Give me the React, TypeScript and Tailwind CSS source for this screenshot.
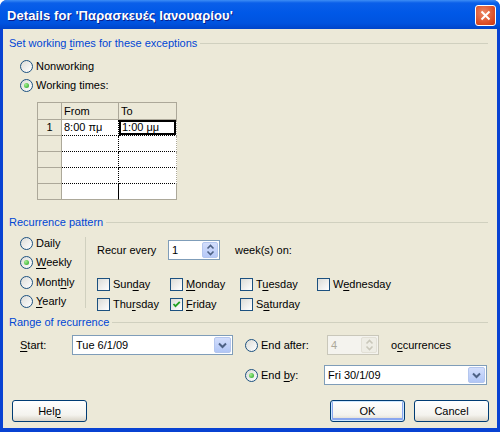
import React from 'react';

// ---------- Small pieces ----------
function Key({ text, k }: { text: string; k: number }) {
  if (k < 0) return <>{text}</>;
  return (
    <>
      {text.slice(0, k)}
      <span className="underline decoration-1 underline-offset-[2px]">{text[k]}</span>
      {text.slice(k + 1)}
    </>
  );
}

function Radio({ checked, children }: { checked?: boolean; children: React.ReactNode }) {
  return (
    <div className="flex items-center h-[13px]">
      <span className="w-[13px] h-[13px] shrink-0 rounded-full border border-[#1C5180] bg-[linear-gradient(135deg,#DCDCD7,#FFFFFF)] flex items-center justify-center">
        {checked ? (
          <span className="w-[5px] h-[5px] rounded-full bg-[radial-gradient(circle_at_35%_35%,#A4F08F,#21A121)]" />
        ) : null}
      </span>
      <span className="ml-[3px] whitespace-nowrap">{children}</span>
    </div>
  );
}

function Check({ checked, children }: { checked?: boolean; children: React.ReactNode }) {
  return (
    <div className="flex items-center h-[13px]">
      <span className="w-[13px] h-[13px] shrink-0 border border-[#1C5180] bg-[linear-gradient(135deg,#DCDCD7,#FFFFFF)] flex items-center justify-center">
        {checked ? (
          <svg width="9" height="9" viewBox="0 0 9 9">
            <path d="M1.5 4 L3.5 6.2 L7.8 1.8" stroke="#21A121" strokeWidth="1.8" fill="none" />
          </svg>
        ) : null}
      </span>
      <span className="ml-[3px] whitespace-nowrap">{children}</span>
    </div>
  );
}

function Section({ title }: { title: React.ReactNode }) {
  return (
    <div className="flex items-center h-[13px] pl-[6px] pr-[9px]">
      <span className="text-[#0046D5] whitespace-nowrap">{title}</span>
      <span className="flex-1 h-px bg-[#D0D0BF] ml-[3px]" />
    </div>
  );
}

function Spin({ value, disabled }: { value: string; disabled?: boolean }) {
  const arrow = disabled ? '#C9C7BA' : '#4D6185';
  return (
    <div
      className={[
        'flex h-[20px] w-[52px] border',
        disabled ? 'border-[#C9C7BA] bg-[#F4F3EE] text-[#ACA899]' : 'border-[#7F9DB9] bg-white',
      ].join(' ')}
    >
      <span className="flex-1 pl-[3px] leading-[18px]">{value}</span>
      <span
        className={[
          'w-[16px] m-px rounded-[2px] flex items-center justify-center',
          disabled
            ? 'bg-[#EEEDE5] border border-[#E2E0D6]'
            : 'bg-[linear-gradient(to_bottom,#D3DEFC,#B6C9F7)] border border-[#B4C6EE]',
        ].join(' ')}
      >
        <svg width="9" height="12" viewBox="0 0 9 12">
          <path d="M1.5 4.5 L4.5 1.5 L7.5 4.5" stroke={arrow} strokeWidth="1.6" fill="none" />
          <path d="M1.5 7.5 L4.5 10.5 L7.5 7.5" stroke={arrow} strokeWidth="1.6" fill="none" />
        </svg>
      </span>
    </div>
  );
}

function Combo({ value, width }: { value: string; width: string }) {
  return (
    <div className={`flex h-[20px] ${width} border border-[#7F9DB9] bg-white`}>
      <span className="flex-1 pl-[3px] leading-[18px]">{value}</span>
      <span className="w-[17px] m-px rounded-[2px] border border-[#B4C6EE] bg-[linear-gradient(to_bottom,#D3DEFC,#B1C6F6)] flex items-center justify-center">
        <svg width="9" height="7" viewBox="0 0 9 7">
          <path d="M1 1.5 L4.5 5 L8 1.5" stroke="#4D6185" strokeWidth="2" fill="none" />
        </svg>
      </span>
    </div>
  );
}

function Button({ children, isDefault }: { children: React.ReactNode; isDefault?: boolean }) {
  return (
    <div
      className={[
        'w-[75px] h-[22px] rounded-[3px] border border-[#003C74] flex items-center justify-center',
        'bg-[linear-gradient(to_bottom,#FFFFFF,#F4F3EE_70%,#D9D4C8)]',
        isDefault ? 'shadow-[inset_0_0_0_1px_#CEE7FF,inset_0_-1px_0_2px_#8AA6EE]' : '',
      ].join(' ')}
    >
      {children}
    </div>
  );
}

// ---------- Dialog ----------
const rows = [
  { n: '1', from: '8:00 πμ', to: '1:00 μμ' },
  { n: '', from: '', to: '' },
  { n: '', from: '', to: '' },
  { n: '', from: '', to: '' },
  { n: '', from: '', to: '' },
];

export default function App() {
  return (
    <div className="w-[500px] h-[432px] bg-white font-['Liberation_Sans',Arial,sans-serif] text-[11px] text-black">
      <div className="flex flex-col h-full rounded-t-[7px] overflow-hidden bg-[#0842D2]">
        {/* Title bar */}
        <div className="h-[29px] shrink-0 flex items-center pt-[2px] pl-[7px] pr-[4px] bg-[linear-gradient(to_bottom,#3D8DF5_0px,#0A5FE9_3px,#0058E7_45%,#0053DF_80%,#0044C9_100%)]">
          <div className="flex-1 text-white font-bold text-[13px] tracking-[0.1px] [text-shadow:1px_1px_#0A1E8C] whitespace-nowrap">
            Details for 'Παρασκευές Ιανουαρίου'
          </div>
          <div className="w-[21px] h-[21px] rounded-[3px] border border-white bg-[radial-gradient(circle_at_40%_35%,#EC8866,#DA4A22_70%,#C63A16)] flex items-center justify-center">
            <svg width="11" height="11" viewBox="0 0 11 11">
              <path d="M1.5 1.5 L9.5 9.5 M9.5 1.5 L1.5 9.5" stroke="#FFFFFF" strokeWidth="2" />
            </svg>
          </div>
        </div>

        {/* Body */}
        <div className="flex-1 mx-[3px] mb-[4px] bg-[#ECE9D8] flex flex-col">
          <div className="mt-[8px]">
            <Section title={<>Set working <Key text="times" k={0} /> for these exceptions</>} />
          </div>

          <div className="pl-[17px] mt-[10px]">
            <Radio>Nonworking</Radio>
          </div>
          <div className="pl-[17px] mt-[6px]">
            <Radio checked>Working times:</Radio>
          </div>

          {/* Grid of working times */}
          <div className="ml-[34px] mt-[10px] w-[140px] grid grid-cols-[24px_57px_58px] grid-rows-[17px_repeat(5,16px)] border-t border-l border-[#ACA899]">
            <div className="bg-[#ECE9D8] border-r border-b border-[#ACA899]" />
            <div className="bg-[#ECE9D8] border-r border-b border-[#ACA899] pl-[2px] leading-[16px]">From</div>
            <div className="bg-[#ECE9D8] border-r border-b border-[#ACA899] pl-[2px] leading-[16px]">To</div>
            {rows.map((r, i) => {
              const last = i === rows.length - 1;
              return (
                <React.Fragment key={i}>
                  <div className="bg-[#ECE9D8] border-r border-b border-[#ACA899] text-center leading-[15px]">
                    {r.n}
                  </div>
                  <div
                    className={[
                      'bg-white border-r border-dotted border-r-black pl-[2px] leading-[15px]',
                      last ? 'border-b border-b-[#ACA899] border-solid' : 'border-b border-b-black',
                    ].join(' ')}
                  >
                    {r.from}
                  </div>
                  <div
                    className={[
                      'bg-white border-r border-r-[#ACA899] pl-[2px] leading-[15px]',
                      last ? 'border-b border-b-[#ACA899]' : 'border-b border-dotted border-b-black',
                      i === 0 ? 'shadow-[inset_0_0_0_2px_#000] pl-[3px]' : '',
                    ].join(' ')}
                  >
                    {r.to}
                  </div>
                </React.Fragment>
              );
            })}
          </div>

          <div className="mt-[16px]">
            <Section title="Recurrence pattern" />
          </div>

          {/* Recurrence */}
          <div className="flex mt-[8px] h-[74px]">
            <div className="w-[82px] pl-[17px] flex flex-col">
              <Radio>Daily</Radio>
              <div className="mt-[6px]">
                <Radio checked><Key text="Weekly" k={0} /></Radio>
              </div>
              <div className="mt-[7px]">
                <Radio><Key text="Monthly" k={4} /></Radio>
              </div>
              <div className="mt-[6px]">
                <Radio><Key text="Yearly" k={0} /></Radio>
              </div>
            </div>
            <div className="w-px h-[71px] bg-[#D0D0BF]" />
            <div className="ml-[11px] flex flex-col">
              <div className="flex items-center mt-[3px]">
                <span className="w-[71px]">Recur every</span>
                <Spin value="1" />
                <span className="ml-[15px]">week(s) on:</span>
              </div>
              <div className="mt-[18px] grid grid-cols-[73px_70px_77px_auto] gap-y-[7px]">
                <Check><Key text="Sunday" k={3} /></Check>
                <Check><Key text="Monday" k={0} /></Check>
                <Check><Key text="Tuesday" k={1} /></Check>
                <Check><Key text="Wednesday" k={1} /></Check>
                <Check><Key text="Thursday" k={3} /></Check>
                <Check checked><Key text="Friday" k={0} /></Check>
                <Check><Key text="Saturday" k={1} /></Check>
              </div>
            </div>
          </div>

          <div className="mt-[5px]">
            <Section title="Range of recurrence" />
          </div>

          {/* Range */}
          <div className="mt-[6px] pl-[17px] grid grid-cols-[52px_161px_auto] gap-y-[10px] items-center">
            <span><Key text="Start:" k={0} /></span>
            <Combo value="Tue 6/1/09" width="w-[161px]" />
            <div className="ml-[12px] flex items-center">
              <div className="w-[82px]">
                <Radio>End after:</Radio>
              </div>
              <Spin value="4" disabled />
              <span className="ml-[12px]"><Key text="occurrences" k={1} /></span>
            </div>
            <span />
            <span />
            <div className="ml-[12px] flex items-center">
              <div className="w-[79px]">
                <Radio checked>End <Key text="by" k={0} />:</Radio>
              </div>
              <Combo value="Fri 30/1/09" width="w-[163px]" />
            </div>
          </div>

          {/* Buttons */}
          <div className="mt-[15px] flex pl-[9px] pr-[8px]">
            <Button>Hel<Key text="p" k={0} /></Button>
            <div className="flex-1" />
            <Button isDefault>OK</Button>
            <div className="ml-[9px]">
              <Button>Cancel</Button>
            </div>
          </div>
        </div>
      </div>
    </div>
  );
}
